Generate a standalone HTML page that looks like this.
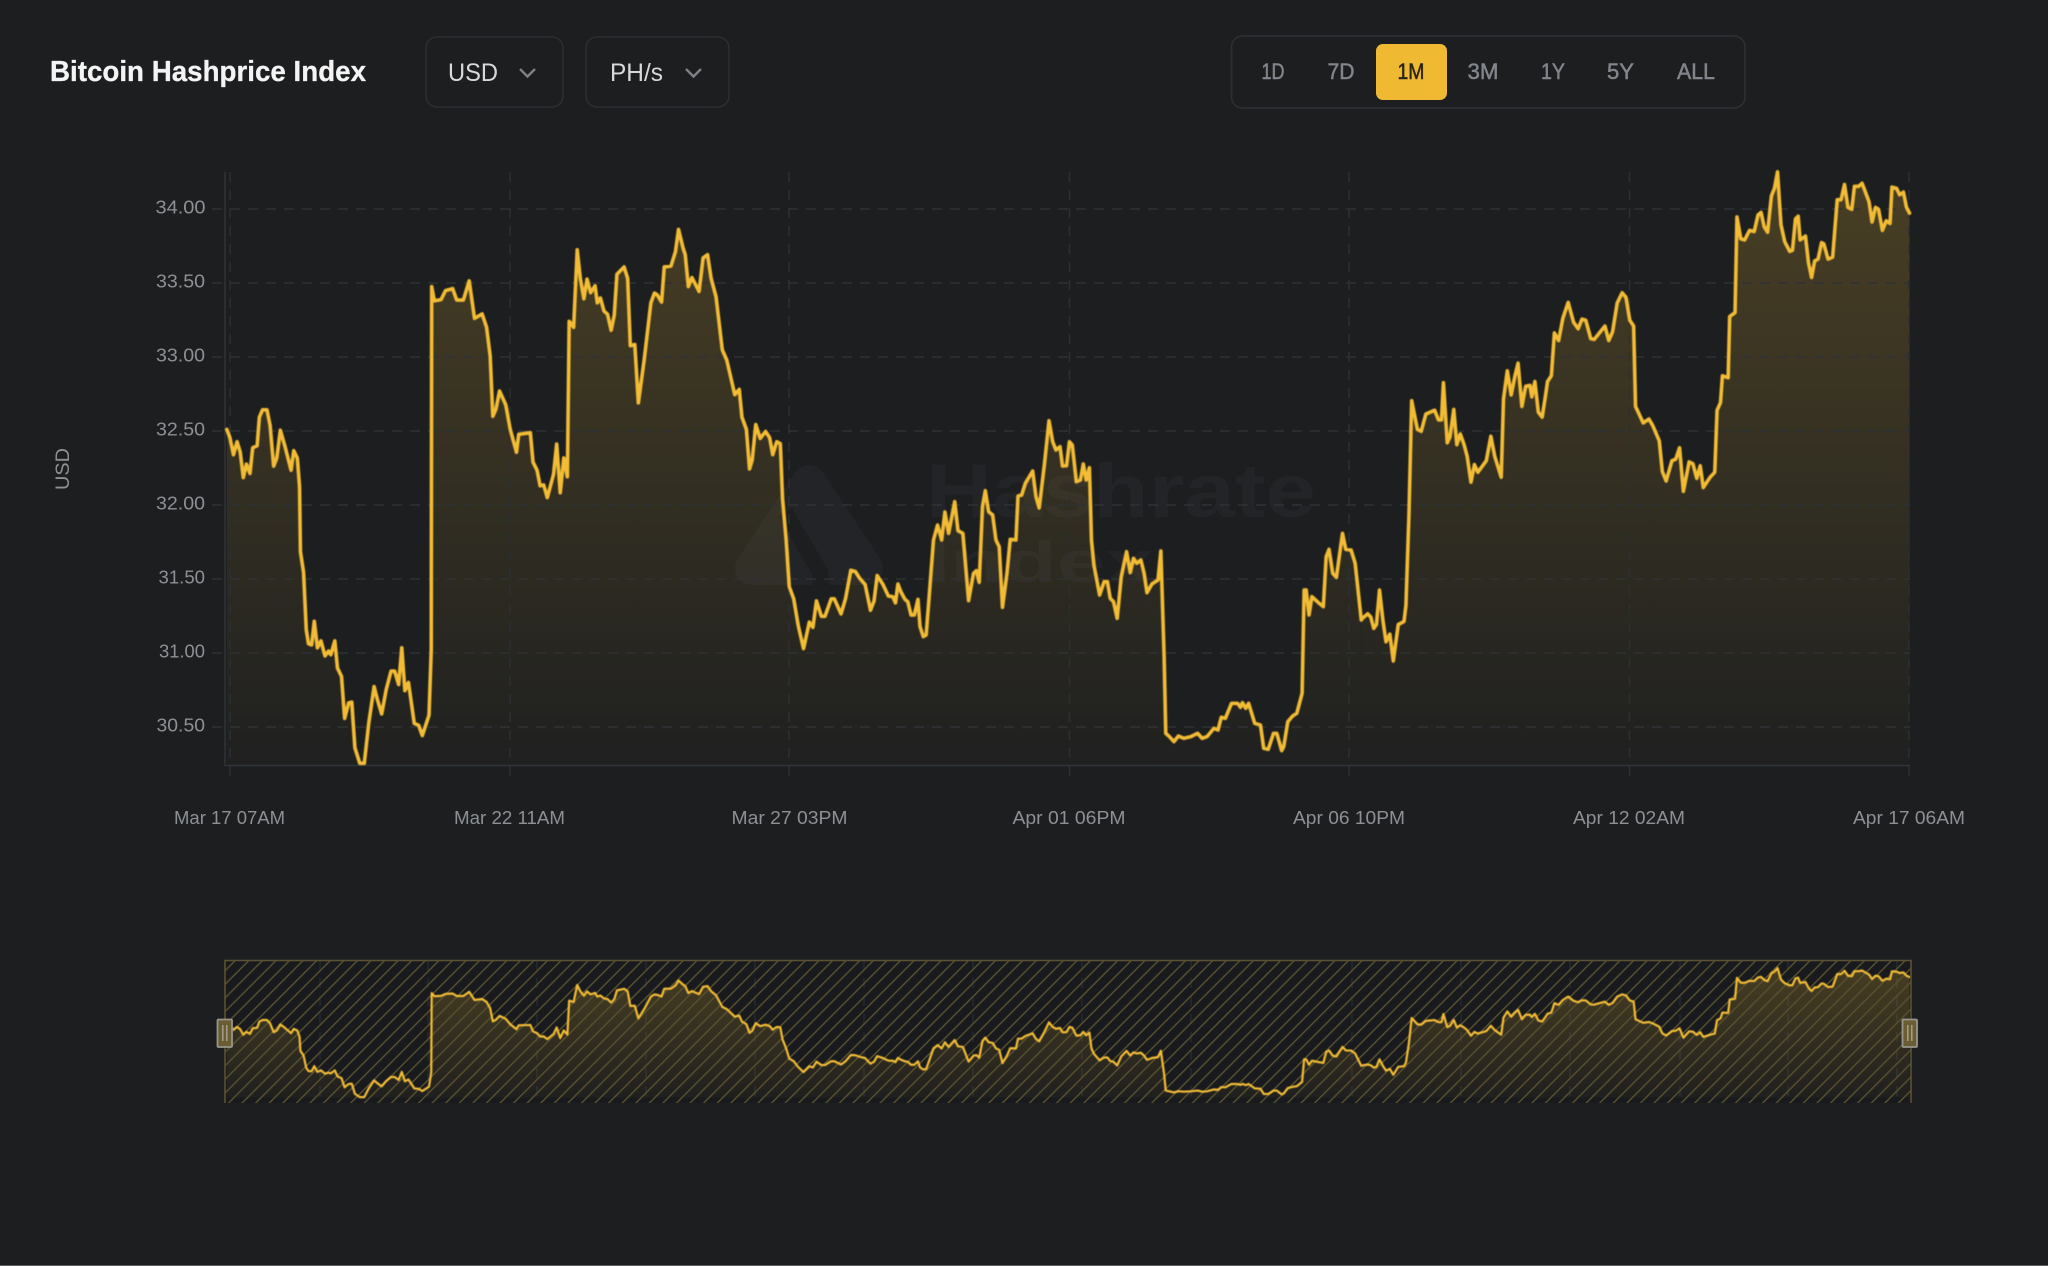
<!DOCTYPE html>
<html><head><meta charset="utf-8"><title>Bitcoin Hashprice Index</title>
<style>
html,body{margin:0;padding:0;background:#1c1e20;width:2048px;height:1266px;overflow:hidden}
svg{display:block;font-family:"Liberation Sans",sans-serif}
.y{font-size:18.5px;fill:#8d9094}
.x{font-size:18.5px;fill:#8d9094}
.r{font-size:22.5px;fill:#82858b;stroke:#82858b;stroke-width:.5;text-anchor:middle}
.l{fill:none;stroke:#f2bc35;stroke-linejoin:round;stroke-linecap:round;vector-effect:non-scaling-stroke}
</style></head><body>
<svg width="2048" height="1266" viewBox="0 0 2048 1266" xmlns="http://www.w3.org/2000/svg">
<defs>
<filter id="b" x="-2%" y="-2%" width="104%" height="104%"><feGaussianBlur stdDeviation=".55"/></filter>
<linearGradient id="g" gradientUnits="userSpaceOnUse" x1="0" y1="172" x2="0" y2="765">
<stop offset="0" stop-color="#f0b932" stop-opacity=".21"/>
<stop offset="1" stop-color="#f0b932" stop-opacity=".015"/>
</linearGradient>
<pattern id="h" patternUnits="userSpaceOnUse" width="9.6" height="9.6" patternTransform="rotate(45)">
<rect x="0" y="0" width="1.5" height="9.6" fill="#554f2e"/>
</pattern>
<clipPath id="area">
<polygon transform="translate(200,160) scale(.4464,.4082)" points="60,1482 60,660 67,680 75,722 83,690 90,715 97,778 104,745 112,768 118,705 128,700 133,630 140,612 150,612 157,650 165,750 172,730 180,662 190,700 204,760 210,712 218,730 223,800 225,960 232,1010 238,1150 243,1185 250,1188 256,1130 263,1195 271,1178 280,1215 288,1203 293,1212 302,1178 308,1245 317,1265 324,1368 333,1330 340,1328 347,1440 358,1478 368,1478 378,1380 390,1290 397,1320 407,1357 417,1298 428,1252 436,1252 445,1285 452,1195 459,1300 467,1280 480,1380 490,1385 498,1410 513,1360 518,1200 519,310 525,345 540,342 550,320 566,315 575,343 590,343 603,296 615,388 632,377 642,410 650,480 656,628 663,610 671,566 685,600 695,660 709,716 714,672 740,668 746,740 755,760 762,798 770,796 778,827 792,770 799,696 807,815 815,730 823,776 827,395 837,410 845,220 852,290 860,340 867,292 875,325 885,308 890,350 897,338 905,370 913,378 921,417 928,380 934,280 950,262 958,290 964,455 974,452 982,595 995,490 1010,350 1018,326 1024,330 1034,348 1040,262 1055,260 1065,225 1072,170 1082,215 1087,232 1094,310 1102,288 1118,322 1127,240 1137,232 1145,290 1156,335 1170,465 1180,490 1198,575 1208,562 1214,630 1224,660 1231,757 1237,735 1245,648 1255,682 1267,665 1276,680 1283,722 1292,690 1300,695 1305,830 1313,930 1320,1045 1330,1075 1340,1140 1352,1197 1365,1132 1373,1145 1381,1080 1392,1118 1400,1118 1414,1075 1421,1075 1436,1112 1446,1075 1458,1005 1468,1008 1478,1025 1490,1040 1502,1103 1510,1080 1517,1018 1530,1040 1542,1068 1552,1070 1558,1085 1563,1042 1563,1482"/>
<polygon transform="translate(760,400) scale(.4082,.3333)" points="332,1095 338,552 345,575 355,598 362,605 370,645 378,645 387,598 392,680 400,710 407,705 415,580 425,420 435,375 445,420 453,336 462,400 477,305 485,392 497,400 511,602 523,520 530,512 537,547 545,320 552,272 560,335 570,345 578,420 586,440 594,622 605,520 613,418 627,420 632,288 641,285 650,250 668,213 676,290 684,324 697,190 708,62 717,125 725,150 735,140 741,198 751,197 758,125 765,135 775,245 785,240 792,192 799,240 807,203 812,420 818,495 832,585 843,545 851,545 858,595 866,605 875,655 885,530 898,455 907,518 915,475 923,490 933,480 941,520 948,578 960,552 975,540 982,453 990,770 994,1000 1003,1010 1014,1025 1025,1008 1038,1015 1055,1010 1072,1000 1083,1015 1095,1010 1112,985 1122,990 1130,952 1140,955 1155,910 1170,910 1177,922 1182,908 1190,925 1197,910 1212,970 1226,975 1234,1045 1245,1048 1258,1000 1266,1000 1278,1052 1283,1040 1293,965 1305,948 1315,940 1328,880 1333,570 1338,570 1345,645 1352,590 1370,610 1380,620 1387,470 1394,448 1403,520 1412,532 1427,400 1435,448 1448,450 1458,490 1473,660 1473,1095"/>
<polygon transform="translate(1360,150) scale(.3827,.3827)" points="0,1607 5,1225 20,1212 28,1220 36,1250 43,1240 51,1150 60,1230 68,1285 78,1265 87,1335 100,1240 115,1232 120,1190 128,950 135,655 142,690 150,730 160,735 172,690 195,680 205,705 213,705 218,608 228,765 235,750 245,678 253,770 262,742 272,770 280,800 290,868 299,822 308,842 330,812 342,748 352,800 369,855 375,650 385,577 395,640 405,590 413,557 423,670 433,617 444,615 449,645 457,605 466,685 476,698 485,640 490,605 500,590 508,478 519,498 530,440 544,398 558,450 570,467 580,442 590,445 603,493 612,495 640,460 650,498 660,475 672,400 685,373 695,385 705,445 715,460 720,670 740,713 755,703 765,720 782,760 790,840 800,865 815,812 825,808 835,778 845,892 860,815 870,820 880,858 889,825 897,882 915,855 927,842 933,680 942,660 947,590 962,595 966,435 980,425 985,175 995,232 1005,235 1018,210 1030,213 1040,170 1048,163 1056,200 1065,215 1075,120 1083,100 1091,57 1100,195 1110,240 1123,265 1130,262 1138,180 1145,173 1150,235 1164,225 1172,295 1180,333 1188,290 1197,285 1206,242 1212,245 1223,285 1235,280 1247,130 1257,130 1266,90 1275,150 1285,155 1292,95 1303,95 1312,87 1330,135 1338,188 1347,150 1355,155 1365,210 1375,185 1385,192 1390,97 1402,100 1410,117 1420,110 1428,150 1436,165 1436,1607"/>
</clipPath>
<g id="L">
<polyline class="l" transform="translate(200,160) scale(.4464,.4082)" points="60,660 67,680 75,722 83,690 90,715 97,778 104,745 112,768 118,705 128,700 133,630 140,612 150,612 157,650 165,750 172,730 180,662 190,700 204,760 210,712 218,730 223,800 225,960 232,1010 238,1150 243,1185 250,1188 256,1130 263,1195 271,1178 280,1215 288,1203 293,1212 302,1178 308,1245 317,1265 324,1368 333,1330 340,1328 347,1440 358,1478 368,1478 378,1380 390,1290 397,1320 407,1357 417,1298 428,1252 436,1252 445,1285 452,1195 459,1300 467,1280 480,1380 490,1385 498,1410 513,1360 518,1200 519,310 525,345 540,342 550,320 566,315 575,343 590,343 603,296 615,388 632,377 642,410 650,480 656,628 663,610 671,566 685,600 695,660 709,716 714,672 740,668 746,740 755,760 762,798 770,796 778,827 792,770 799,696 807,815 815,730 823,776 827,395 837,410 845,220 852,290 860,340 867,292 875,325 885,308 890,350 897,338 905,370 913,378 921,417 928,380 934,280 950,262 958,290 964,455 974,452 982,595 995,490 1010,350 1018,326 1024,330 1034,348 1040,262 1055,260 1065,225 1072,170 1082,215 1087,232 1094,310 1102,288 1118,322 1127,240 1137,232 1145,290 1156,335 1170,465 1180,490 1198,575 1208,562 1214,630 1224,660 1231,757 1237,735 1245,648 1255,682 1267,665 1276,680 1283,722 1292,690 1300,695 1305,830 1313,930 1320,1045 1330,1075 1340,1140 1352,1197 1365,1132 1373,1145 1381,1080 1392,1118 1400,1118 1414,1075 1421,1075 1436,1112 1446,1075 1458,1005 1468,1008 1478,1025 1490,1040 1502,1103 1510,1080 1517,1018 1530,1040 1542,1068 1552,1070 1558,1085 1563,1042"/>
<polyline class="l" transform="translate(760,400) scale(.4082,.3333)" points="338,552 345,575 355,598 362,605 370,645 378,645 387,598 392,680 400,710 407,705 415,580 425,420 435,375 445,420 453,336 462,400 477,305 485,392 497,400 511,602 523,520 530,512 537,547 545,320 552,272 560,335 570,345 578,420 586,440 594,622 605,520 613,418 627,420 632,288 641,285 650,250 668,213 676,290 684,324 697,190 708,62 717,125 725,150 735,140 741,198 751,197 758,125 765,135 775,245 785,240 792,192 799,240 807,203 812,420 818,495 832,585 843,545 851,545 858,595 866,605 875,655 885,530 898,455 907,518 915,475 923,490 933,480 941,520 948,578 960,552 975,540 982,453 990,770 994,1000 1003,1010 1014,1025 1025,1008 1038,1015 1055,1010 1072,1000 1083,1015 1095,1010 1112,985 1122,990 1130,952 1140,955 1155,910 1170,910 1177,922 1182,908 1190,925 1197,910 1212,970 1226,975 1234,1045 1245,1048 1258,1000 1266,1000 1278,1052 1283,1040 1293,965 1305,948 1315,940 1328,880 1333,570 1338,570 1345,645 1352,590 1370,610 1380,620 1387,470 1394,448 1403,520 1412,532 1427,400 1435,448 1448,450 1458,490 1473,660"/>
<polyline class="l" transform="translate(1360,150) scale(.3827,.3827)" points="5,1225 20,1212 28,1220 36,1250 43,1240 51,1150 60,1230 68,1285 78,1265 87,1335 100,1240 115,1232 120,1190 128,950 135,655 142,690 150,730 160,735 172,690 195,680 205,705 213,705 218,608 228,765 235,750 245,678 253,770 262,742 272,770 280,800 290,868 299,822 308,842 330,812 342,748 352,800 369,855 375,650 385,577 395,640 405,590 413,557 423,670 433,617 444,615 449,645 457,605 466,685 476,698 485,640 490,605 500,590 508,478 519,498 530,440 544,398 558,450 570,467 580,442 590,445 603,493 612,495 640,460 650,498 660,475 672,400 685,373 695,385 705,445 715,460 720,670 740,713 755,703 765,720 782,760 790,840 800,865 815,812 825,808 835,778 845,892 860,815 870,820 880,858 889,825 897,882 915,855 927,842 933,680 942,660 947,590 962,595 966,435 980,425 985,175 995,232 1005,235 1018,210 1030,213 1040,170 1048,163 1056,200 1065,215 1075,120 1083,100 1091,57 1100,195 1110,240 1123,265 1130,262 1138,180 1145,173 1150,235 1164,225 1172,295 1180,333 1188,290 1197,285 1206,242 1212,245 1223,285 1235,280 1247,130 1257,130 1266,90 1275,150 1285,155 1292,95 1303,95 1312,87 1330,135 1338,188 1347,150 1355,155 1365,210 1375,185 1385,192 1390,97 1402,100 1410,117 1420,110 1428,150 1436,165"/>
</g>
</defs>

<rect width="2048" height="1266" fill="#1c1e20"/>
<rect y="1265" width="2048" height="1" fill="#5a5c5e"/>

<!-- Header -->
<text x="50" y="81" font-size="29" font-weight="700" fill="#f4f4f4" stroke="#f4f4f4" stroke-width=".3" textLength="316" lengthAdjust="spacingAndGlyphs">Bitcoin Hashprice Index</text>
<rect x="426" y="37" width="137" height="70" rx="11" fill="none" stroke="#2b2e32" stroke-width="1.6"/>
<text x="448" y="81" font-size="25" fill="#d8d9da" textLength="50" lengthAdjust="spacingAndGlyphs">USD</text>
<polyline points="520,69 527.5,76.5 535,69" fill="none" stroke="#7d8085" stroke-width="2.4"/>
<rect x="586" y="37" width="143" height="70" rx="11" fill="none" stroke="#2b2e32" stroke-width="1.6"/>
<text x="610" y="81" font-size="25" fill="#d8d9da" textLength="53" lengthAdjust="spacingAndGlyphs">PH/s</text>
<polyline points="686,69 693.5,76.5 701,69" fill="none" stroke="#7d8085" stroke-width="2.4"/>

<rect x="1231.5" y="36" width="513.5" height="72" rx="11" fill="none" stroke="#2b2e32" stroke-width="1.8"/>
<rect x="1376" y="44" width="71" height="56" rx="7" fill="#f0b932"/>
<text class="r" x="1273" y="79" textLength="23" lengthAdjust="spacingAndGlyphs">1D</text>
<text class="r" x="1341" y="79" textLength="27" lengthAdjust="spacingAndGlyphs">7D</text>
<text class="r" x="1411" y="79" textLength="27" lengthAdjust="spacingAndGlyphs" style="fill:#2a2618;stroke:#2a2618">1M</text>
<text class="r" x="1483" y="79" textLength="31" lengthAdjust="spacingAndGlyphs">3M</text>
<text class="r" x="1553" y="79" textLength="24" lengthAdjust="spacingAndGlyphs">1Y</text>
<text class="r" x="1620.5" y="79" textLength="27" lengthAdjust="spacingAndGlyphs">5Y</text>
<text class="r" x="1696" y="79" textLength="38" lengthAdjust="spacingAndGlyphs">ALL</text>

<!-- Watermark -->
<g fill="#222427">
<path d="M809 482 L866 568 L752 568 Z" stroke="#222427" stroke-width="34" stroke-linejoin="round"/>
<path d="M785 512 L820 572 L822 592" fill="none" stroke="#1c1e20" stroke-width="16" stroke-linejoin="round"/>
<text x="926" y="517" font-size="76" font-weight="700" textLength="390" lengthAdjust="spacingAndGlyphs">Hashrate</text>
<text x="926" y="582" font-size="58" font-weight="700" textLength="228" lengthAdjust="spacingAndGlyphs">Index</text>
</g>

<!-- Area -->
<rect x="220" y="165" width="1695" height="605" fill="url(#g)" clip-path="url(#area)"/>

<!-- Grid -->
<g stroke="#2f3235" stroke-width="1.5" fill="none" stroke-dasharray="10 8">
<path d="M212 209H1910M212 283H1910M212 357H1910M212 431H1910M212 505H1910M212 579H1910M212 653H1910M212 727H1910"/>
</g>
<g stroke="#2c2f33" stroke-width="1.5" fill="none" stroke-dasharray="10 8">
<path d="M230 172V779M510 172V779M789 172V779M1069.5 172V779M1349 172V779M1629.5 172V779M1909 172V779"/>
</g>
<path d="M225 172V765.5H1910" fill="none" stroke="#303337" stroke-width="1.5"/>

<!-- Line -->
<g filter="url(#b)"><use href="#L" stroke-width="3.6"/></g>

<!-- Y labels -->
<text class="y" x="155.5" y="213.5" textLength="50" lengthAdjust="spacingAndGlyphs">34.00</text>
<text class="y" x="156" y="287.5" textLength="49" lengthAdjust="spacingAndGlyphs">33.50</text>
<text class="y" x="156" y="361.5" textLength="49" lengthAdjust="spacingAndGlyphs">33.00</text>
<text class="y" x="156" y="435.5" textLength="49" lengthAdjust="spacingAndGlyphs">32.50</text>
<text class="y" x="156" y="509.5" textLength="49" lengthAdjust="spacingAndGlyphs">32.00</text>
<text class="y" x="158.5" y="583.5" textLength="46.5" lengthAdjust="spacingAndGlyphs">31.50</text>
<text class="y" x="159" y="657.5" textLength="46" lengthAdjust="spacingAndGlyphs">31.00</text>
<text class="y" x="156.5" y="731.5" textLength="48.5" lengthAdjust="spacingAndGlyphs">30.50</text>
<text transform="rotate(-90 69 469)" x="69" y="469" font-size="19.5" fill="#8d9094" text-anchor="middle" textLength="42" lengthAdjust="spacingAndGlyphs">USD</text>

<!-- X labels -->
<text class="x" x="174" y="824" textLength="111" lengthAdjust="spacingAndGlyphs">Mar 17 07AM</text>
<text class="x" x="454" y="824" textLength="111" lengthAdjust="spacingAndGlyphs">Mar 22 11AM</text>
<text class="x" x="731.5" y="824" textLength="116" lengthAdjust="spacingAndGlyphs">Mar 27 03PM</text>
<text class="x" x="1012.5" y="824" textLength="113" lengthAdjust="spacingAndGlyphs">Apr 01 06PM</text>
<text class="x" x="1293" y="824" textLength="112" lengthAdjust="spacingAndGlyphs">Apr 06 10PM</text>
<text class="x" x="1573" y="824" textLength="112" lengthAdjust="spacingAndGlyphs">Apr 12 02AM</text>
<text class="x" x="1853" y="824" textLength="112" lengthAdjust="spacingAndGlyphs">Apr 17 06AM</text>

<!-- Navigator -->
<rect x="225" y="960" width="1686" height="143" fill="#181a1e"/>
<g stroke="#25282e" stroke-width="1.6" stroke-dasharray="10 8" fill="none">
<path d="M320 960V1103M428 960V1103M537 960V1103M646 960V1103M755 960V1103M864 960V1103M973 960V1103M1082 960V1103M1191 960V1103M1352 960V1103M1461 960V1103M1570 960V1103M1680 960V1103M1788 960V1103M1897 960V1103"/>
</g>
<g transform="translate(0,930.5) scale(1,.2183)">
<rect x="220" y="165" width="1695" height="605" fill="url(#g)" clip-path="url(#area)"/>
<rect x="220" y="165" width="1695" height="605" fill="#f0b932" fill-opacity=".02" clip-path="url(#area)"/>
</g>
<rect x="225" y="960" width="1686" height="143" fill="url(#h)"/>
<g filter="url(#b)"><g transform="translate(0,930.5) scale(1,.2183)"><use href="#L" stroke-width="2.2"/></g></g>
<path d="M225 1103V960.5H1911V1103" fill="none" stroke="#5c5130" stroke-width="1.6"/>
<g>
<rect x="217.5" y="1019.5" width="14.5" height="27.5" fill="#6b5d33" stroke="#97968d" stroke-width="1.8" rx="1"/>
<path d="M222.8 1025V1041M226.8 1025V1041" stroke="#a9a48e" stroke-width="1.4"/>
<rect x="1902.5" y="1019.5" width="14.5" height="27.5" fill="#6b5d33" stroke="#97968d" stroke-width="1.8" rx="1"/>
<path d="M1907.8 1025V1041M1911.8 1025V1041" stroke="#a9a48e" stroke-width="1.4"/>
</g>
</svg>
</body></html>
